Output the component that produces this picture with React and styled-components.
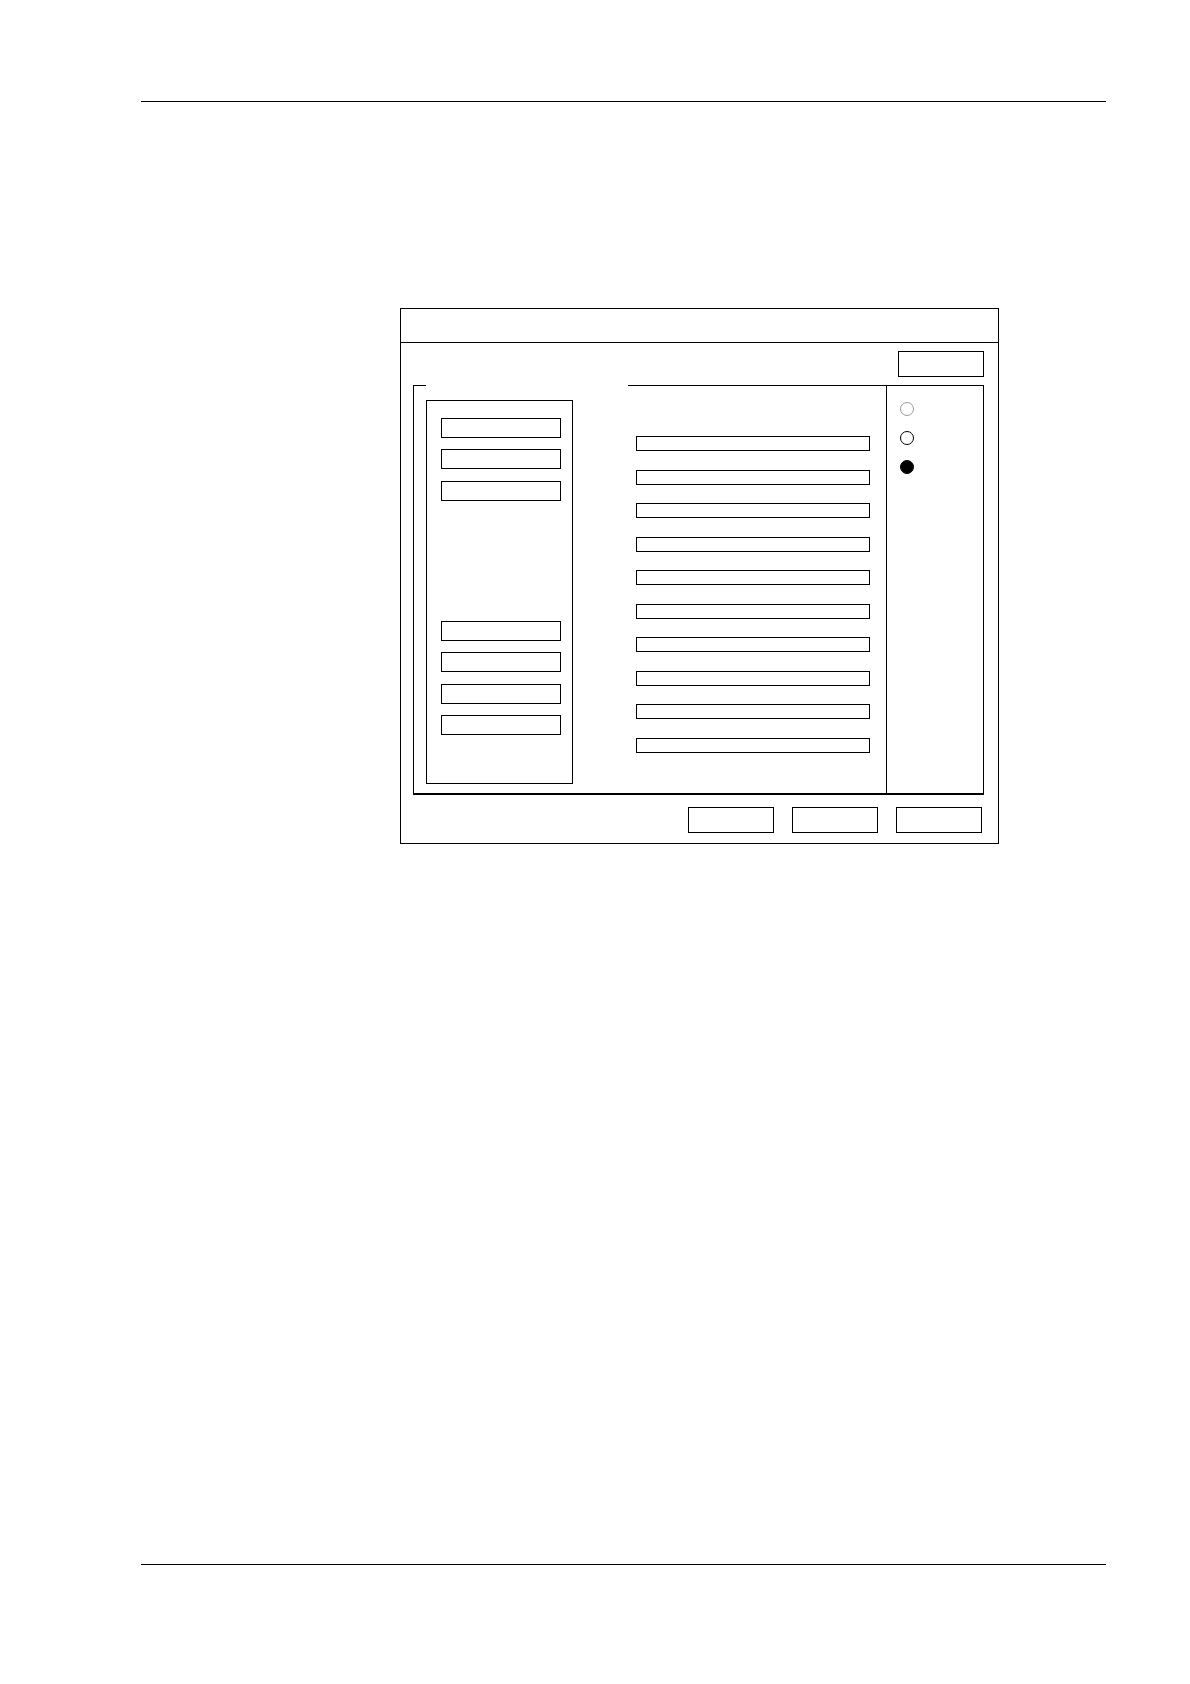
import React from "react";
import styled, { createGlobalStyle } from "styled-components";

const Global = createGlobalStyle`
  html, body { margin: 0; padding: 0; background: #fff; }
  body { font-family: "Liberation Sans", Arial, sans-serif; color: #000; }
  * { box-sizing: border-box; }
`;

const Page = styled.div`
  width: 1190px;
  height: 1684px;
  display: flex;
  flex-direction: column;
  padding: 101px 84px 119px 141px;
`;

const Rule = styled.div`
  flex: none;
  height: 1px;
  background: #000;
  margin-top: ${(p) => (p.$bottom ? "auto" : "0")};
`;

const Dialog = styled.div`
  margin: 206px 0 0 259px;
  width: 599px;
  border: 1px solid #000;
  display: flex;
  flex-direction: column;
  background: #fff;
`;

const TitleBar = styled.div`
  height: 34px;
  border-bottom: 1px solid #000;
`;

const Toolbar = styled.div`
  height: 42px;
  display: flex;
  justify-content: flex-end;
  align-items: flex-start;
  padding: 8px 14px 0 0;
`;

const PushButton = styled.button`
  flex: none;
  width: ${(p) => p.$w || 86}px;
  height: ${(p) => p.$h || 26}px;
  padding: 0;
  margin: 0;
  border: 1px solid #000;
  border-radius: 0;
  background: #fff;
  font: inherit;
`;

const GroupBox = styled.div`
  margin: 0 14px 0 12px;
  display: flex;
  border-left: 1px solid #000;
  border-right: 1px solid #000;
  border-bottom: 2px solid #000;
  background-image: linear-gradient(
    to right,
    #000 0,
    #000 12px,
    transparent 12px,
    transparent 214px,
    #000 214px,
    #000 100%
  );
  background-repeat: no-repeat;
  background-size: 100% 1px;
  background-position: top left;
`;

const LeftArea = styled.div`
  flex: none;
  padding: 15px 0 9px 12px;
`;

const ListPanel = styled.div`
  width: 147px;
  height: 384px;
  border: 1px solid #000;
  padding: 17px 0 0 14px;
  display: flex;
  flex-direction: column;
`;

const ButtonStack = styled.div`
  display: flex;
  flex-direction: column;
  gap: 11.4px;
  margin-top: ${(p) => p.$offset || 0}px;
`;

const Middle = styled.div`
  flex: none;
  width: 313px;
  padding: 51px 0 0 63px;
  display: flex;
  flex-direction: column;
  gap: 18.56px;
`;

const Field = styled.div`
  width: 234px;
  height: 15px;
  border: 1px solid #000;
  background: #fff;
`;

const RightCol = styled.div`
  flex: 1;
  border-left: 1px solid #000;
  padding: 17px 0 0 13px;
  display: flex;
  flex-direction: column;
  gap: 15px;
`;

const Radio = styled.span`
  display: block;
  width: 14px;
  height: 14px;
  border-radius: 50%;
  border: 1px solid ${(p) => (p.$disabled ? "#9a9a9a" : "#000")};
  background: ${(p) => (p.$checked ? "#000" : "#fff")};
`;

const ActionRow = styled.div`
  display: flex;
  justify-content: flex-end;
  gap: 18px;
  padding: 12px 16px 10px 0;
`;

export default function App() {
  const upper = [0, 1, 2];
  const lower = [0, 1, 2, 3];
  const fields = Array.from({ length: 10 }, (_, i) => i);
  return (
    <>
      <Global />
      <Page>
        <Rule />
        <Dialog>
          <TitleBar />
          <Toolbar>
            <PushButton type="button" />
          </Toolbar>
          <GroupBox>
            <LeftArea>
              <ListPanel>
                <ButtonStack>
                  {upper.map((i) => (
                    <PushButton key={i} type="button" $w={120} $h={20} />
                  ))}
                </ButtonStack>
                <ButtonStack $offset={120}>
                  {lower.map((i) => (
                    <PushButton key={i} type="button" $w={120} $h={20} />
                  ))}
                </ButtonStack>
              </ListPanel>
            </LeftArea>
            <Middle>
              {fields.map((i) => (
                <Field key={i} />
              ))}
            </Middle>
            <RightCol>
              <Radio $disabled />
              <Radio />
              <Radio $checked />
            </RightCol>
          </GroupBox>
          <ActionRow>
            <PushButton type="button" />
            <PushButton type="button" />
            <PushButton type="button" />
          </ActionRow>
        </Dialog>
        <Rule $bottom />
      </Page>
    </>
  );
}
